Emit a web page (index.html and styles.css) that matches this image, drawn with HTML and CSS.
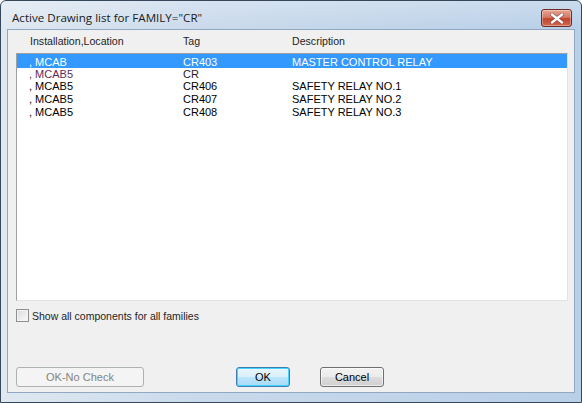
FILE: index.html
```html
<!DOCTYPE html>
<html>
<head>
<meta charset="utf-8">
<link rel="stylesheet" href="styles.css">
</head>
<body>
<div class="window">
  <div class="titlebar">
    <span class="title">Active Drawing list for FAMILY="CR"</span>
    <button class="close" aria-label="Close">
      <svg width="14" height="11" viewBox="0 0 14 11">
        <path d="M2 1.5 L12 9.5 M12 1.5 L2 9.5" stroke="#5a2a2a" stroke-width="3.6" stroke-linecap="round" opacity="0.55"/>
        <path d="M2 1.5 L12 9.5 M12 1.5 L2 9.5" stroke="#ffffff" stroke-width="2.4" stroke-linecap="round"/>
      </svg>
    </button>
  </div>
  <div class="frame">
    <div class="client">
      <div class="header">
        <span class="col c1">Installation,Location</span>
        <span class="col c2">Tag</span>
        <span class="col c3">Description</span>
      </div>
      <div class="listbox">
        <div class="row selected r1"><span class="col c1">, MCAB</span><span class="col c2">CR403</span><span class="col c3">MASTER CONTROL RELAY</span></div>
        <div class="row r2"><span class="col c1 purple">, MCAB5</span><span class="col c2 dark">CR</span><span class="col c3"></span></div>
        <div class="row"><span class="col c1">, MCAB5</span><span class="col c2">CR406</span><span class="col c3">SAFETY RELAY NO.1</span></div>
        <div class="row"><span class="col c1">, MCAB5</span><span class="col c2">CR407</span><span class="col c3">SAFETY RELAY NO.2</span></div>
        <div class="row"><span class="col c1">, MCAB5</span><span class="col c2">CR408</span><span class="col c3">SAFETY RELAY NO.3</span></div>
      </div>
      <label class="check"><span class="box"></span><span class="label">Show all components for all families</span></label>
      <div class="buttons">
        <button class="btn nocheck" disabled>OK-No Check</button>
        <button class="btn ok">OK</button>
        <button class="btn cancel">Cancel</button>
      </div>
    </div>
  </div>
</div>
</body>
</html>
```

FILE: styles.css
```css
* { box-sizing: border-box; }
html, body { margin: 0; padding: 0; background: #ffffff; }
.window {
  width: 582px;
  height: 403px;
  border: 1px solid #37475a;
  border-radius: 6px 6px 0 0;
  background: linear-gradient(90deg, #dfe8f1 0%, #c9d9eb 35%, #b8cfe8 100%);
  overflow: hidden;
  display: flex;
  flex-direction: column;
}
.titlebar {
  height: 28px;
  display: flex;
  align-items: flex-start;
  justify-content: space-between;
  background: linear-gradient(180deg, rgba(255,255,255,0.25), rgba(255,255,255,0));
}
.title {
  font-family: "Open Sans", "Noto Sans", sans-serif;
  font-size: 11.6px;
  color: #1a1a1a;
  margin-left: 11px;
  margin-top: 10px;
  line-height: 14px;
}
.close {
  width: 31px;
  height: 18px;
  margin-top: 8px;
  margin-right: 9px;
  padding: 0;
  border: 1px solid #6b2a24;
  border-radius: 3px;
  background: linear-gradient(180deg, #e8a493 0%, #d47a66 45%, #c2422c 55%, #cf6a4f 100%);
  box-shadow: inset 0 0 0 1px rgba(255,255,255,0.35);
  display: flex;
  align-items: center;
  justify-content: center;
}
.frame {
  flex: 1;
  padding: 0 6px 9px 6px;
  display: flex;
}
.client {
  flex: 1;
  border: 1px solid #90a8c2;
  background: #f0f0f0;
  display: flex;
  flex-direction: column;
  font-family: "Liberation Sans", Arial, sans-serif;
  font-size: 11px;
  color: #000;
}
.header {
  height: 23px;
  display: flex;
  padding-top: 5px;
  font-size: 10.6px;
  line-height: 13px;
  color: #1e1e1e;
}
.header .c1 { margin-left: 22px; width: 153px; }
.header .c2 { width: 109px; }
.listbox {
  margin-left: 8px;
  width: 552px;
  height: 248px;
  border: 1px solid #a0a0a0;
  border-right-color: #e3e3e3;
  border-bottom-color: #e3e3e3;
  background: #ffffff;
  display: flex;
  flex-direction: column;
}
.row {
  display: flex;
  height: 13px;
  line-height: 13px;
  padding-top: 1px;
}
.row.r1 { height: 14px; padding-top: 2px; }
.row.r2 { height: 11px; padding-top: 0; }
.row .c1 { width: 166px; padding-left: 12px; }
.row .c2 { width: 109px; }
.selected { background: #3399ff; color: #ffffff; }
.purple { color: #5e2a58; }
.dark { color: #2e2020; }
.check {
  display: flex;
  align-items: center;
  margin-top: 8px;
  margin-left: 8px;
  height: 13px;
}
.box {
  width: 13px;
  height: 13px;
  border: 1px solid #8e8f8f;
  background: linear-gradient(135deg, #dcdcdc, #fafafa);
  box-shadow: inset 0 0 0 1px #f4f4f4;
}
.label {
  margin-left: 3px;
  font-size: 10.5px;
  color: #1e1e1e;
}
.buttons {
  display: flex;
  margin-top: 45px;
  margin-left: 8px;
}
.btn {
  height: 20px;
  padding: 0;
  font-family: "Liberation Sans", Arial, sans-serif;
  font-size: 11px;
  color: #000;
  border: 1px solid #707070;
  border-radius: 3px;
  background: linear-gradient(180deg, #f2f2f2 0%, #ebebeb 50%, #dddddd 51%, #cfcfcf 100%);
  box-shadow: inset 0 0 0 1px rgba(255,255,255,0.6);
}
.nocheck {
  width: 128px;
  color: #838383;
  border-color: #adb2b5;
  background: #f4f4f4;
  box-shadow: none;
}
.ok {
  width: 54px;
  margin-left: 92px;
  border-color: #3c7fb1;
  box-shadow: inset 0 0 0 1px #48d2ff;
  background: linear-gradient(180deg, #eaf6fd 0%, #d9f0fc 50%, #bee6fd 51%, #a7d9f5 100%);
}
.cancel {
  width: 64px;
  margin-left: 30px;
}
```
